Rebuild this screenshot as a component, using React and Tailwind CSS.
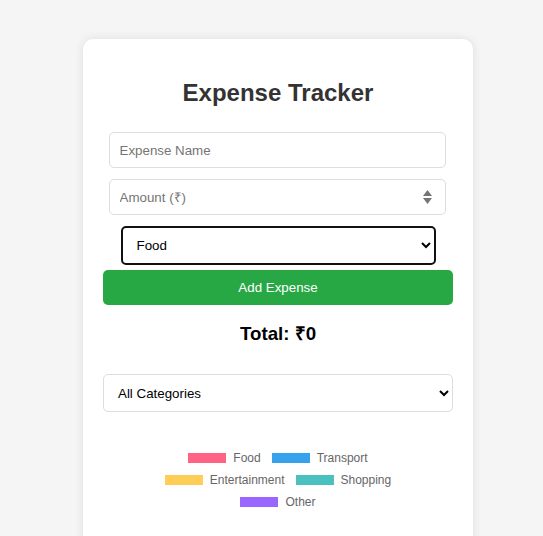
import { useState } from 'react';

const categories = ['Food', 'Transport', 'Entertainment', 'Shopping', 'Other'];

const legendRows = [
  [
    { label: 'Food', color: 'bg-[#ff6384]' },
    { label: 'Transport', color: 'bg-[#36a2eb]' },
  ],
  [
    { label: 'Entertainment', color: 'bg-[#ffce56]' },
    { label: 'Shopping', color: 'bg-[#4bc0c0]' },
  ],
  [{ label: 'Other', color: 'bg-[#9966ff]' }],
];

export default function App() {
  const [name, setName] = useState('');
  const [amount, setAmount] = useState('');
  const [category, setCategory] = useState('Food');
  const [filter, setFilter] = useState('All');

  return (
    <div className="min-h-screen bg-[#f5f5f5] pt-[39px] font-['Liberation_Sans',Arial,sans-serif] overflow-hidden">
      <div className="ml-[83px] w-[390px] min-h-[560px] bg-white rounded-[10px] shadow-[0_0_10px_rgba(0,0,0,0.1)] px-[20px] pt-[40px]">
        {/* Title */}
        <h1 className="text-center text-[24px] leading-[28px] font-bold text-[#333]">Expense Tracker</h1>

        {/* Form */}
        <div className="mt-[25px] flex flex-col items-center">
          <input
            type="text"
            value={name}
            onChange={(e) => setName(e.target.value)}
            placeholder="Expense Name"
            className="mr-[2px] w-[337px] h-[36px] px-[10px] text-[13.33px] border border-[#ddd] rounded-[5px] placeholder:text-[#757575] outline-none"
          />
          <div className="relative mt-[11px] mr-[2px] w-[337px]">
            <input
              type="text"
              value={amount}
              onChange={(e) => setAmount(e.target.value)}
              placeholder="Amount (₹)"
              className="w-full h-[36px] px-[10px] text-[13.33px] border border-[#ddd] rounded-[5px] placeholder:text-[#757575] outline-none"
            />
            <svg className="absolute right-[13px] top-[10px]" width="11" height="16" viewBox="0 0 11 16">
              <path d="M5.5 1 L10 7 L1 7 Z" fill="#757575" />
              <path d="M5.5 15 L10 9 L1 9 Z" fill="#757575" />
            </svg>
          </div>
          <select
            value={category}
            onChange={(e) => setCategory(e.target.value)}
            className="mt-[11px] w-[315px] h-[39px] px-[10px] text-[13.33px] text-black bg-white border-2 border-[#111] rounded-[5px] outline-none"
          >
            {categories.map((c) => (
              <option key={c}>{c}</option>
            ))}
          </select>
          <button className="mt-[5px] w-full h-[35px] bg-[#28a745] text-white text-[13.33px] rounded-[5px]">
            Add Expense
          </button>
        </div>

        {/* Total */}
        <h3 className="mt-[18px] text-center text-[18.72px] leading-[22px] font-bold text-black">Total: ₹0</h3>

        {/* Filter */}
        <select
          value={filter}
          onChange={(e) => setFilter(e.target.value)}
          className="mt-[29px] w-full h-[38px] px-[10px] text-[13.33px] text-black bg-white border border-[#ddd] rounded-[5px] outline-none"
        >
          <option value="All">All Categories</option>
          {categories.map((c) => (
            <option key={c}>{c}</option>
          ))}
        </select>

        {/* Chart legend */}
        <div className="mt-[39px] flex flex-col items-center gap-[8px]">
          {legendRows.map((row, i) => (
            <div key={i} className="flex items-center gap-[11px] h-[14px]">
              {row.map((item) => (
                <div key={item.label} className="flex items-center gap-[7px]">
                  <span className={`w-[38px] h-[10px] ${item.color}`} />
                  <span className="text-[12px] leading-[14px] text-[#666]">{item.label}</span>
                </div>
              ))}
            </div>
          ))}
        </div>
      </div>
    </div>
  );
}
